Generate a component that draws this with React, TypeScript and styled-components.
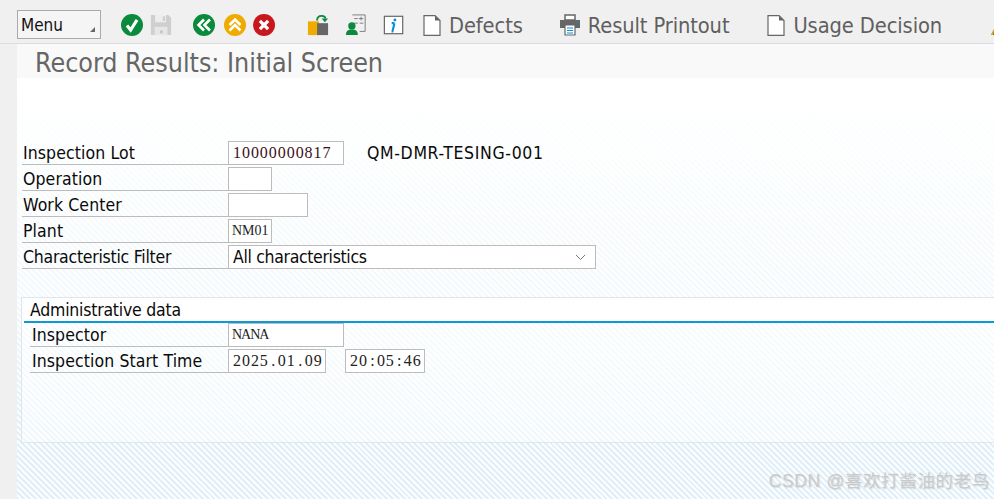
import React from "react";
import styled, { createGlobalStyle } from "styled-components";

const Global = createGlobalStyle`
  html, body { margin: 0; padding: 0; height: 100%; overflow: hidden; background: #f0f0f0; }
  #root { height: 100%; }
`;

const Frame = styled.div`position: relative; width: 994px; height: 499px;`;
const Page = styled.div`
  width: 994px; height: 499px; display: flex; flex-direction: column; overflow: hidden;
  font-family: "DejaVu Sans", "Noto Sans", sans-serif; font-stretch: condensed; color: #000;
`;
const Toolbar = styled.div`
  height: 43px; flex: none; display: flex; align-items: center;
  background: #f0f0f0; border-bottom: 1px solid #dcdcdc; padding-left: 17px; white-space: nowrap; overflow: hidden;
`;
const MenuButton = styled.div`
  box-sizing: border-box; width: 84px; height: 29px; margin-top: 6px; border: 1px solid #a9a9a9; background: #f5f5f5;
  padding-left: 3px; display: flex; align-items: center; font-size: 17px; position: relative; flex: none;
  color: #111;
`;
const MenuCorner = styled.span`
  position: absolute; right: 5px; bottom: 6px; width: 0; height: 0;
  border-left: 5px solid transparent; border-bottom: 5px solid #666;
`;
const IconSlot = styled.span<{ $ml: number }>`
  margin-left: ${p => p.$ml}px; width: 22px; height: 22px; margin-top: 7px; flex: none; display: block;
  svg { display: block; width: 100%; height: 100%; }
`;
const TextButton = styled.span<{ $ml: number }>`
  margin-left: ${p => p.$ml}px; display: flex; align-items: center; gap: 8px; margin-top: 7px;
  font-size: 21.700px; color: #5f5f5f; flex: none; letter-spacing: -0.1px;
  svg { flex: none; display: block; }
`;
const Body = styled.div`
  flex: 1; margin-left: 17px; display: flex; flex-direction: column; min-height: 0;
  background:
    linear-gradient(180deg, #fff 0, #fff 8%, rgba(255,255,255,.6) 55%, rgba(255,255,255,0) 85%),
    repeating-linear-gradient(45deg, #e1f0f8 0 2.1px, #fbfdfe 2.1px 4.2px);
`;
const TitleBar = styled.div`
  height: 34px; flex: none; background: #f9f9f9; padding-left: 18px; font-size: 26.600px; line-height: 37px; color: #666;
`;
const Form = styled.div`
  padding: 61px 0 0 5px; display: flex; flex-direction: column;
`;
const FormRow = styled.div`
  display: flex; height: 26px; align-items: flex-end; flex: none;
`;
const Label = styled.div<{ $w: number; $pl?: number; $ls?: number }>`
  width: ${p => p.$w}px; height: 26px; box-sizing: border-box; border-bottom: 1px solid #bcbcbc; padding-left: ${p => p.$pl ?? 1}px;
  font-size: 17.500px; line-height: 25px; padding-top: 2px; flex: none; color: #0a0a0a; white-space: nowrap;
  letter-spacing: ${p => p.$ls ?? 0.1}px;
`;
const Field = styled.div<{ $w: number; $ml?: number }>`
  box-sizing: border-box; width: ${p => p.$w}px; height: 24px; margin-left: ${p => p.$ml ?? 0}px; flex: none; border: 1px solid #bcbcbc; background: #fff;
  font-family: "Liberation Serif", serif; font-size: 16px; line-height: 22px; padding-left: 4px; font-stretch: normal;
  letter-spacing: 0.95px; color: #222; overflow: hidden; white-space: nowrap;
`;
const LotField = styled(Field)`color: #3b1020;`;
const Narrow = styled(Field)<{ $ls?: number }>`font-size: 14px; letter-spacing: ${p => p.$ls ?? 0}px; padding-left: 3px;`;
const Sep = styled.span`display: inline-block; width: 9px; text-align: center; letter-spacing: 0;`;
const Describe = styled.div`
  margin: 0 0 0 23px; font-size: 17.500px; line-height: 24px; color: #0a0a0a; letter-spacing: .65px;
`;
const Select = styled.div`
  box-sizing: border-box; width: 368px; height: 24px; flex: none; border: 1px solid #bcbcbc; background: #fff;
  padding: 0 9px 0 4px; display: flex; align-items: center; justify-content: space-between; font-size: 17.500px; color: #0a0a0a;
  letter-spacing: -.33px;
`;
const Panel = styled.div`
  margin: 28px 0 0 4px; height: 146px; flex: none; box-sizing: border-box;
  border: 1px solid #e3e6e8; border-right: 0; padding: 0 0 0 2px; display: flex; flex-direction: column;
  background: rgba(255,255,255,.55);
`;
const PanelHead = styled.div`
  height: 25px; box-sizing: border-box; border-bottom: 2px solid #0b9ad6; padding-left: 6px; background: #fff;
  font-size: 17.500px; line-height: 25px; flex: none; color: #0a0a0a; letter-spacing: -.22px;
`;
const PanelRows = styled.div`
  padding-left: 6px; margin-top: -2px; display: flex; flex-direction: column;
`;
const Watermark = styled.div`
  position: absolute; right: 4px; bottom: 7px; font-family: "Liberation Sans", "Noto Sans CJK SC", sans-serif;
  font-size: 17.500px; line-height: 22px; color: #cbcbcb; text-shadow: 1px 1px 1px rgba(120,120,120,.2); letter-spacing: .65px;
`;

const Check = () => (
  <svg viewBox="0 0 24 24"><circle cx="12" cy="12" r="12" fill="#0b8a3e"/>
    <path d="M6.500 12.500l4 5 7-11" fill="none" stroke="#fff" strokeWidth="3.400"/></svg>
);
const Save = () => (
  <svg viewBox="0 0 24 24"><path d="M1 1h19l3 3v19H1z" fill="#cfcfcf"/><path d="M5.500 1h12v8h-12z" fill="#ededed"/>
    <path d="M14 2.500h2.500v5H14z" fill="#cfcfcf"/><path d="M5 14h14v9H5z" fill="#e6e6e6"/><path d="M11 18h3v3h-3z" fill="#c4c4c4"/></svg>
);
const Back = () => (
  <svg viewBox="0 0 24 24"><circle cx="12" cy="12" r="12" fill="#0b8a3e"/>
    <path d="M12 6l-6 6 6 6M18.500 6l-6 6 6 6" fill="none" stroke="#fff" strokeWidth="2.800"/></svg>
);
const Up = () => (
  <svg viewBox="0 0 24 24"><circle cx="12" cy="12" r="12" fill="#f0ab00"/>
    <path d="M6 12l6-6 6 6M6 18l6-6 6 6" fill="none" stroke="#fff" strokeWidth="2.800"/></svg>
);
const Cancel = () => (
  <svg viewBox="0 0 24 24"><circle cx="12" cy="12" r="12" fill="#c8171d"/>
    <path d="M7.500 7.500l9 9M16.500 7.500l-9 9" fill="none" stroke="#fff" strokeWidth="3.600"/></svg>
);
const Transfer = () => (
  <svg viewBox="0 0 24 24"><path d="M1 8h12v15H1z" fill="#f0ab00"/><path d="M11 10h12v13H11z" fill="#666"/>
    <path d="M11 7c0-3 2-5 5-5s4 1 4 3" fill="none" stroke="#0b8a3e" strokeWidth="2"/><path d="M16 5h7l-3.500 4z" fill="#0b8a3e"/></svg>
);
const Person = () => (
  <svg viewBox="0 0 24 24"><path d="M8 1h14v18h-6" fill="none" stroke="#777" strokeWidth="1"/>
    <path d="M10 5h4M15 5h5M17.500 3v4M10 10h4M16 10h4" stroke="#777" strokeWidth="1"/>
    <circle cx="7.500" cy="13" r="4" fill="#0b8a3e"/><path d="M1 23c0-5 3-6 6.500-6s6.500 1 6.500 6z" fill="#0b8a3e"/></svg>
);
const Info = () => (
  <svg viewBox="0 0 24 24"><rect x="1.500" y="2.500" width="20" height="19" fill="#fff" stroke="#666" strokeWidth="1.300"/>
    <circle cx="13" cy="6.500" r="1.600" fill="#0a8ed6"/><path d="M12.500 10l-2.200 9h-1M9.500 10h3" fill="none" stroke="#0a8ed6" strokeWidth="2.300"/></svg>
);
const Doc = () => (
  <svg width="18" height="21" viewBox="0 0 18 21"><path d="M1 .6h11l5 5v14.800H1z" fill="#fff" stroke="#666" strokeWidth="1.200"/>
    <path d="M12 .6v5h5z" fill="#666"/></svg>
);
const Printer = () => (
  <svg width="20" height="22" viewBox="0 0 20 22"><path d="M5 1h10v5H5z" fill="#fff" stroke="#666" strokeWidth="1.500"/>
    <path d="M0 6h20v8H0z" fill="#666" /><path d="M5 11h10v10H5z" fill="#fff" stroke="#666" strokeWidth="1.200"/>
    <path d="M7 14h6M7 16.500h6M7 19h6" stroke="#0a8ed6" strokeWidth="1"/><path d="M16 8h3" stroke="#0a8ed6" strokeWidth="1"/></svg>
);
const Partial = () => (
  <svg viewBox="0 0 24 24"><path d="M0 23L3 17h10v6z" fill="#666"/><path d="M0 23L3 17h1L2 23z" fill="#f0ab00"/></svg>
);
const Chevron = () => (
  <svg width="11" height="7" viewBox="0 0 11 7"><path d="M1 1l4.500 4.500L10 1" fill="none" stroke="#777" strokeWidth="1"/></svg>
);

export default function App() {
  return (
    <Frame>
      <Global />
      <Page>
        <Toolbar>
          <MenuButton>Menu<MenuCorner /></MenuButton>
          <IconSlot $ml={20}><Check /></IconSlot>
          <IconSlot $ml={7}><Save /></IconSlot>
          <IconSlot $ml={21}><Back /></IconSlot>
          <IconSlot $ml={9}><Up /></IconSlot>
          <IconSlot $ml={7}><Cancel /></IconSlot>
          <IconSlot $ml={32}><Transfer /></IconSlot>
          <IconSlot $ml={16}><Person /></IconSlot>
          <IconSlot $ml={16}><Info /></IconSlot>
          <TextButton $ml={18}><Doc />Defects</TextButton>
          <TextButton $ml={37}><Printer />Result Printout</TextButton>
          <TextButton $ml={38}><Doc />Usage Decision</TextButton>
          <IconSlot $ml={49}><Partial /></IconSlot>
        </Toolbar>
        <Body>
          <TitleBar>Record Results: Initial Screen</TitleBar>
          <Form>
            <FormRow>
              <Label $w={206}>Inspection Lot</Label>
              <LotField $w={116}>10000000817</LotField>
              <Describe>QM-DMR-TESING-001</Describe>
            </FormRow>
            <FormRow>
              <Label $w={206}>Operation</Label>
              <Field $w={44} />
            </FormRow>
            <FormRow>
              <Label $w={206}>Work Center</Label>
              <Field $w={80} />
            </FormRow>
            <FormRow>
              <Label $w={206}>Plant</Label>
              <Narrow $w={44}>NM01</Narrow>
            </FormRow>
            <FormRow>
              <Label $w={206} $ls={-0.25}>Characteristic Filter</Label>
              <Select>All characteristics<Chevron /></Select>
            </FormRow>
          </Form>
          <Panel>
            <PanelHead>Administrative data</PanelHead>
            <PanelRows>
              <FormRow>
                <Label $w={198} $pl={2}>Inspector</Label>
                <Narrow $w={116} $ls={-1}>NANA</Narrow>
              </FormRow>
              <FormRow>
                <Label $w={198} $pl={2}>Inspection Start Time</Label>
                <Field $w={98}>2025<Sep>.</Sep>01<Sep>.</Sep>09</Field>
                <Field $w={80} $ml={19}>20<Sep>:</Sep>05<Sep>:</Sep>46</Field>
              </FormRow>
            </PanelRows>
          </Panel>
        </Body>
      </Page>
      <Watermark>CSDN @喜欢打酱油的老鸟</Watermark>
    </Frame>
  );
}
